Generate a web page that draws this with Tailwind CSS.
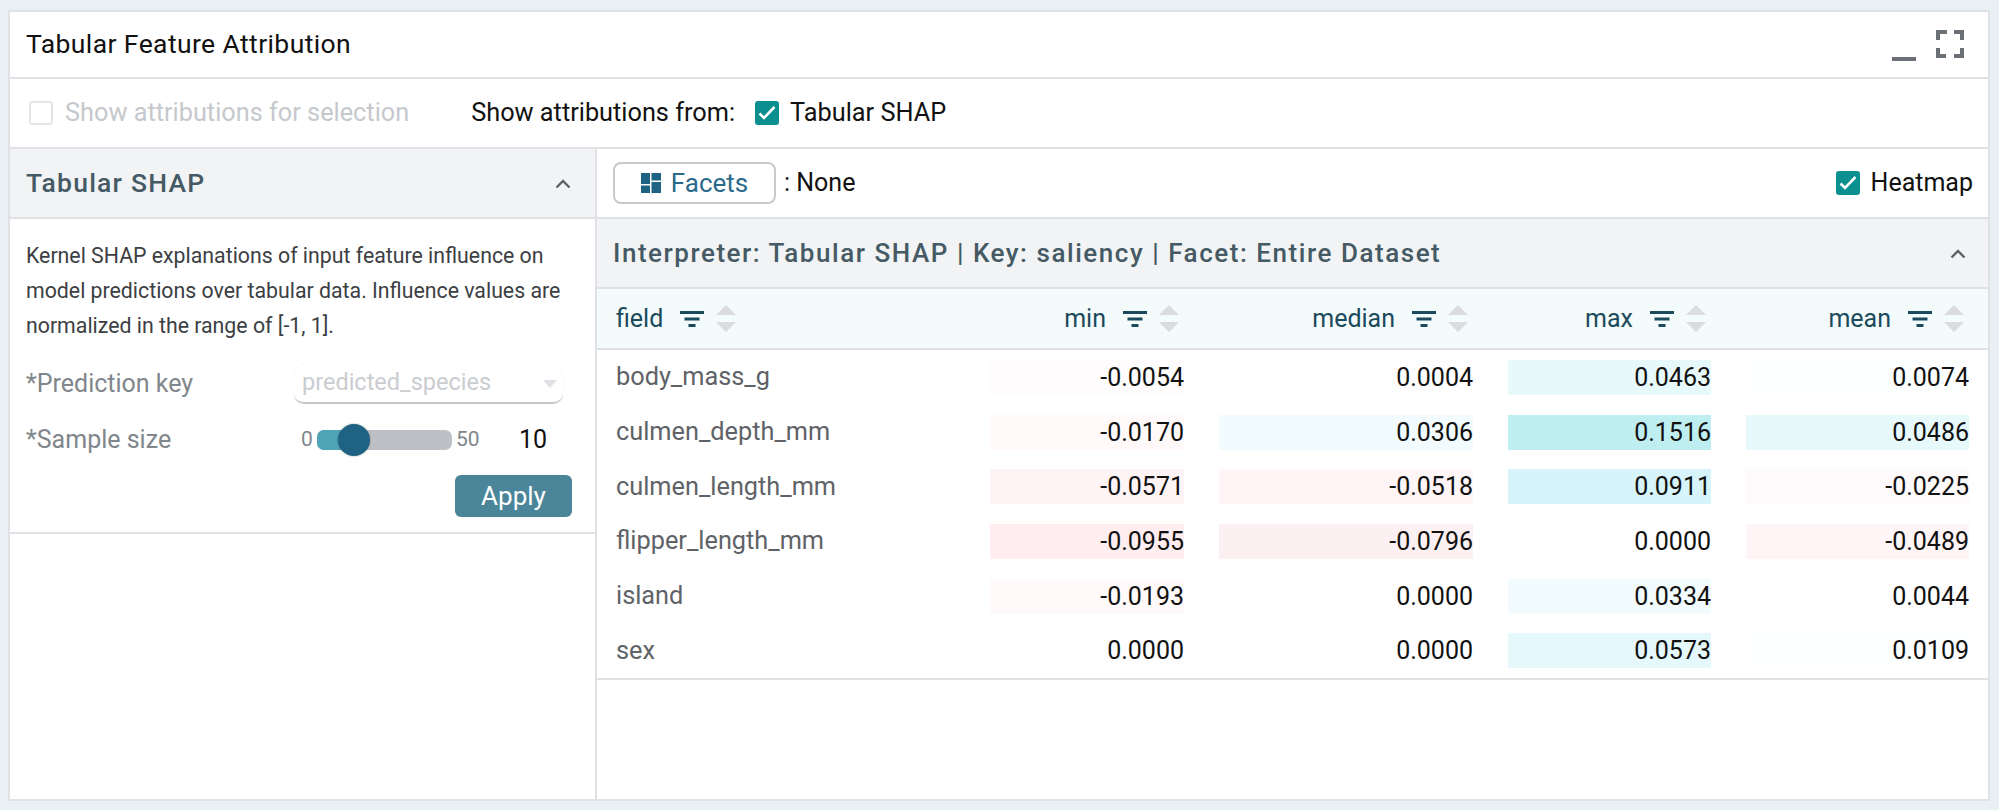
<!DOCTYPE html>
<html lang="en">
<head>
  <meta charset="UTF-8" />
  <title>Tabular Feature Attribution</title>
  <script src="https://cdn.jsdelivr.net/npm/@tailwindcss/browser@4"></script>
</head>
<body class="h-[810px] overflow-hidden bg-[#e8f0f3] p-[10px_9px_9px_8px] font-['Roboto',sans-serif]">
  <div class="flex h-full flex-col border-2 border-[#dfe1e5] bg-white">

    <!-- Title -->
    <div class="flex h-[67px] shrink-0 items-center justify-between border-b-2 border-[#dfe1e5] pb-[2px] pl-[16px] pr-[24px]">
      <div class="text-[26.5px] tracking-[0.4px] text-[#111]">Tabular Feature Attribution</div>
      <div class="flex items-center gap-[20px] text-[#6b6f76]">
        <div class="mt-[30px] h-[4px] w-[24px] bg-[#6b6f76]"></div>
        <svg width="28" height="28" viewBox="0 0 28 28" fill="none" stroke="currentColor" stroke-width="4"><path d="M2 10V2h9M18 2h8v8M26 18v8h-8M10 26H2v-8" /></svg>
      </div>
    </div>

    <!-- Controls -->
    <div class="flex h-[70px] shrink-0 items-center border-b-2 border-[#dfe1e5] pl-[19px] text-[25.3px]">
      <div class="h-[24px] w-[24px] rounded-[3px] border-2 border-[#e4e5e7]"></div>
      <div class="ml-[12px] text-[#c5c8cc]">Show attributions for selection</div>
      <div class="ml-[62px] text-[#111]">Show attributions from:</div>
      <div class="ml-[20px] flex h-[24px] w-[24px] items-center justify-center rounded-[3px] bg-[#0b8f8f]">
        <svg width="20" height="20" viewBox="0 0 20 20" fill="none" stroke="white" stroke-width="2.6"><path d="M2.500 10.500l4.500 4.500L17.500 4" /></svg>
      </div>
      <div class="ml-[11px] text-[#111]">Tabular SHAP</div>
    </div>

    <div class="flex min-h-0 flex-1">
      <!-- Left pane -->
      <div class="w-[587px] shrink-0 border-r-2 border-[#dfe1e5]">
        <div class="flex h-[70px] items-center justify-between border-b-2 border-[#dfe1e5] bg-[#f1f3f4] pl-[16px] pr-[24px]">
          <div class="text-[26.5px] font-medium tracking-[1.2px] text-[#455a64]">Tabular SHAP</div>
          <svg width="16" height="11" viewBox="0 0 16 11" fill="none" stroke="#5f6368" stroke-width="2.4"><path d="M1.500 9.500L8 3l6.500 6.500" /></svg>
        </div>
        <div class="h-[315px] border-b-2 border-[#dfe1e5] pl-[16px] pt-[19px]">
          <p class="w-[545px] text-[21.3px] leading-[35px] text-[#3c4043]">Kernel SHAP explanations of input feature influence on model predictions over tabular data. Influence values are normalized in the range of [-1, 1].</p>
          <div class="mt-[21px] flex h-[40px] items-center">
            <div class="w-[268px] text-[25px] text-[#80868b]">*Prediction key</div>
            <div class="relative flex h-[40px] w-[269px] items-center rounded-[10px] border-b-2 border-[#c4c7cb] pl-[8px] text-[23.5px] text-[#c9ccd0] shadow-[0_0_1px_#dfe1e5]">
              predicted_species
              <div class="absolute right-[6px] top-[16px] h-0 w-0 border-x-[7px] border-t-[8px] border-x-transparent border-t-[#dfe1e5]"></div>
            </div>
          </div>
          <div class="mt-[16px] flex h-[40px] items-center">
            <div class="w-[275px] text-[25px] text-[#80868b]">*Sample size</div>
            <div class="w-[14px] text-[21px] text-[#80868b]">0</div>
            <div class="relative ml-[2px] h-[20px] w-[135px] rounded-[7px] bg-[#bdc1c6]">
              <div class="h-full w-[37px] rounded-l-[7px] bg-[#4fa5b5]"></div>
              <div class="absolute left-[21px] top-[-6px] h-[32px] w-[32px] rounded-full bg-[#1f6384] shadow-[0_0_2px_rgba(0,0,0,0.4)]"></div>
            </div>
            <div class="ml-[4px] w-[24px] text-[21px] text-[#80868b]">50</div>
            <div class="ml-[39px] text-[25px] text-[#111]">10</div>
          </div>
          <div class="mt-[15px] flex justify-end pr-[23px]">
            <div class="flex h-[42px] w-[117px] items-center justify-center rounded-[6px] bg-[#4a8599] text-[26px] text-white">Apply</div>
          </div>
        </div>
      </div>

      <!-- Right pane -->
      <div class="min-w-0 flex-1">
        <div class="flex h-[70px] items-center justify-between border-b-2 border-[#dfe1e5] pl-[16px] pr-[15px]">
          <div class="flex items-center">
            <div class="flex h-[42px] w-[163px] items-center justify-center gap-[10px] rounded-[8px] border-2 border-[#c6cacd] text-[26px] text-[#2a6a8a]">
              <svg width="20" height="20" viewBox="0 0 20 20" fill="#1f6384"><path d="M0 0h9v11H0zM0 12.500h9V20H0zM10.500 0H20v7.500h-9.500zM10.500 9H20v11h-9.500z" /></svg>
              Facets
            </div>
            <div class="ml-[8px] text-[25px] text-[#111]">: None</div>
          </div>
          <div class="flex items-center gap-[11px]">
            <div class="flex h-[24px] w-[24px] items-center justify-center rounded-[3px] bg-[#0b8f8f]">
              <svg width="20" height="20" viewBox="0 0 20 20" fill="none" stroke="white" stroke-width="2.6"><path d="M2.500 10.500l4.500 4.500L17.500 4" /></svg>
            </div>
            <div class="text-[25px] text-[#111]">Heatmap</div>
          </div>
        </div>
        <div class="flex h-[70px] items-center justify-between border-b-2 border-[#dfe1e5] bg-[#f1f3f4] pl-[16px] pr-[22px]">
          <div class="text-[26px] font-medium tracking-[1.54px] text-[#455a64]">Interpreter: Tabular SHAP | Key: saliency | Facet: Entire Dataset</div>
          <svg width="16" height="11" viewBox="0 0 16 11" fill="none" stroke="#5f6368" stroke-width="2.4"><path d="M1.500 9.500L8 3l6.500 6.500" /></svg>
        </div>

        <!-- Table -->
        <div id="tableHead" class="grid h-[61px] grid-cols-[339px_194px_254px_203px_223px] items-center gap-x-[35px] border-b-2 border-[#dfe1e5] bg-[#f3fbfb] pl-[19px] text-[25px] text-[#1b4a5c]"></div>
        <div id="tableBody" class="border-b-2 border-[#dfe1e5]"></div>
      </div>
    </div>
  </div>

  <template id="headIcons">
    <svg class="ml-[17px] shrink-0" width="24" height="16" viewBox="0 0 24 16" fill="#1b4a5c"><path d="M0 0h24v3H0zM4.500 6.500h15v3h-15zM8.500 13h7v3h-7z" /></svg>
    <svg class="ml-[12px] mr-[5px] shrink-0" width="20" height="27" viewBox="0 0 20 27" fill="#dadce0"><path d="M10 0l10 10H0zM0 17h20L10 27z" /></svg>
  </template>

  <script>
    const columns = ["field", "min", "median", "max", "mean"];
    const rows = [
      ["body_mass_g", "-0.0054", "#fefcfc", "0.0004", "#fefefe", "0.0463", "#e8f9fc", "0.0074", "#fdfefe"],
      ["culmen_depth_mm", "-0.0170", "#fff9fa", "0.0306", "#f2fbfd", "0.1516", "#bfeef0", "0.0486", "#e8f9fc"],
      ["culmen_length_mm", "-0.0571", "#fff4f5", "-0.0518", "#fff4f6", "0.0911", "#d6f4fa", "-0.0225", "#fef9fa"],
      ["flipper_length_mm", "-0.0955", "#ffedf0", "-0.0796", "#fdf0f3", "0.0000", "#fefefe", "-0.0489", "#fff4f6"],
      ["island", "-0.0193", "#fff9fa", "0.0000", "#fefefe", "0.0334", "#f2fbfd", "0.0044", "#fefefe"],
      ["sex", "0.0000", "#fefefe", "0.0000", "#fefefe", "0.0573", "#e5f8fb", "0.0109", "#fdfefe"],
    ];

    const tableHead = document.getElementById("tableHead");
    const tableBody = document.getElementById("tableBody");
    const headIcons = document.getElementById("headIcons");

    columns.forEach((name, i) => {
      const cell = document.createElement("div");
      cell.className = i === 0 ? "flex items-center justify-start" : "flex items-center justify-end";
      cell.textContent = name;
      cell.appendChild(headIcons.content.cloneNode(true));
      tableHead.appendChild(cell);
    });

    rows.forEach(row => {
      const el = document.createElement("div");
      el.className = "grid h-[54.7px] grid-cols-[339px_194px_254px_203px_223px] items-center gap-x-[35px] pl-[19px] text-[25px]";
      const field = document.createElement("div");
      field.className = "text-[25.3px] text-[#5f6368]";
      field.textContent = row[0];
      el.appendChild(field);
      for (let i = 1; i < row.length; i += 2) {
        const cell = document.createElement("div");
        cell.className = "h-[35px] text-right leading-[35px] text-[#111]";
        cell.textContent = row[i];
        cell.style.backgroundColor = row[i + 1];
        el.appendChild(cell);
      }
      tableBody.appendChild(el);
    });
  </script>
</body>
</html>
